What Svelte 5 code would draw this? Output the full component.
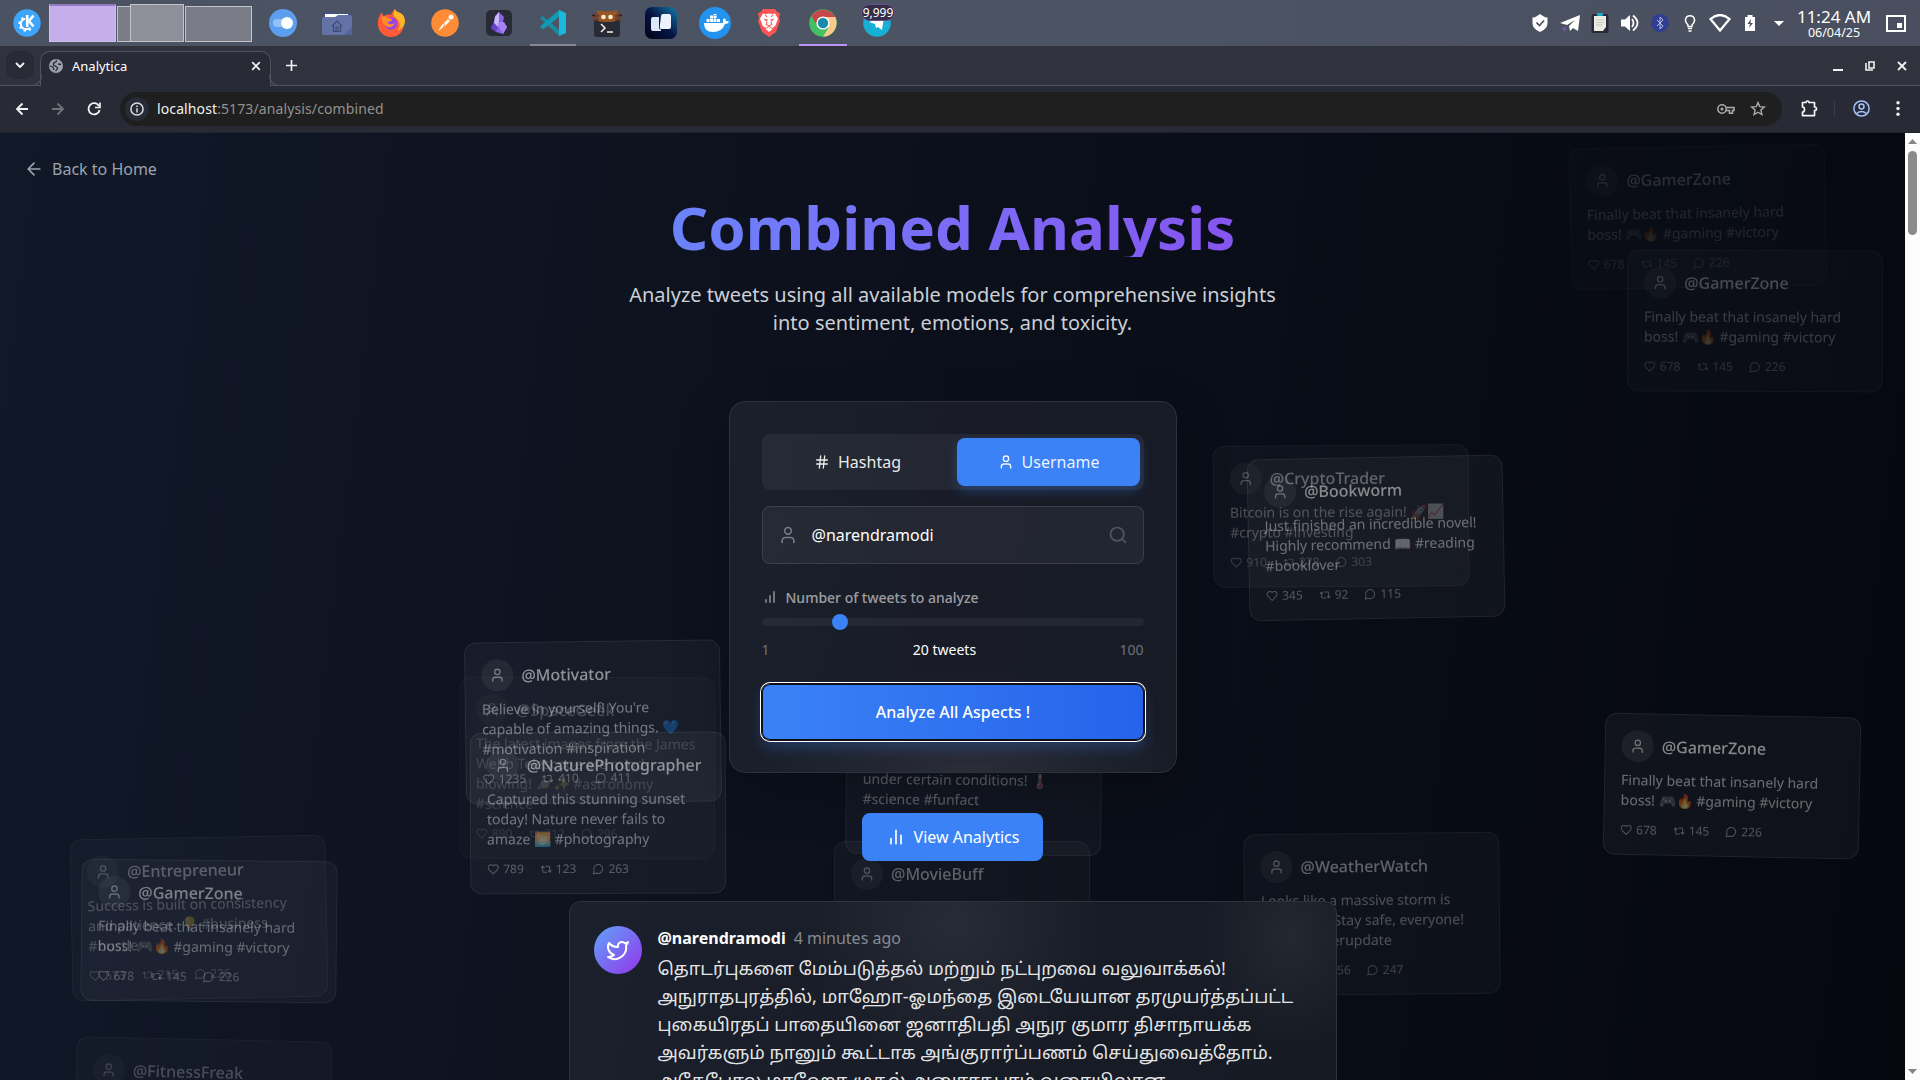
<script lang="ts">
  type Floating = {
    name: string;
    text: string;
    likes: string;
    shares: string;
    replies: string;
    x: number;
    y: number;
    turn: number;
    alpha: number;
  };

  const gamer = {
    name: '@GamerZone',
    text: 'Finally beat that insanely hard boss! 🎮🔥 #gaming #victory',
    likes: '678',
    shares: '145',
    replies: '226'
  };

  // x / y give the centre of each drifting card inside the page canvas
  const floating: Floating[] = [
    { ...gamer, x: 1697.5, y: 83.5, turn: -1.05, alpha: 0.15 },
    { ...gamer, x: 1754.5, y: 187.5, turn: 0.25, alpha: 0.27 },
    { name: '@CryptoTrader', text: 'Bitcoin is on the rise again! 🚀📈 #crypto #investing', likes: '910', shares: '278', replies: '303', x: 1341, y: 382.5, turn: -0.35, alpha: 0.36 },
    { name: '@Bookworm', text: 'Just finished an incredible novel! Highly recommend 📖 #reading #booklover', likes: '345', shares: '92', replies: '115', x: 1375.5, y: 404.5, turn: -1.1, alpha: 0.54 },
    { name: '@SpaceGeek', text: 'The latest images from the James Webb Telescope are mind-blowing! 🪐✨ #astronomy #science', likes: '890', shares: '312', replies: '296', x: 587, y: 634.5, turn: 0.2, alpha: 0.22 },
    { name: '@Motivator', text: "Believe in yourself! You're capable of amazing things. 💙 #motivation #inspiration", likes: '1235', shares: '410', replies: '411', x: 592.5, y: 588.5, turn: -0.75, alpha: 0.58 },
    { name: '@NaturePhotographer', text: 'Captured this stunning sunset today! Nature never fails to amaze 🌅 #photography', likes: '789', shares: '123', replies: '263', x: 597.5, y: 680, turn: -0.2, alpha: 0.57 },
    { name: '@Entrepreneur', text: 'Success is built on consistency and patience. 💡 #business #hustle', likes: '573', shares: '215', replies: '226', x: 198.5, y: 784.5, turn: -1.1, alpha: 0.32 },
    { ...gamer, x: 208.5, y: 797.5, turn: 0.6, alpha: 0.48 },
    { name: '@FitnessFreak', text: 'Morning workout done! Feeling energized and ready. 💪 #fitness', likes: '432', shares: '98', replies: '120', x: 203, y: 977, turn: 1.2, alpha: 0.25 },
    { name: '@ScienceFacts', text: 'Did you know that hot water can freeze faster than cold water under certain conditions! 🌡️ #science #funfact', likes: '654', shares: '187', replies: '210', x: 974, y: 631, turn: 0.6, alpha: 0.45 },
    { name: '@MovieBuff', text: 'That movie was a masterpiece! 🎬🍿 #movies #mustwatch', likes: '567', shares: '134', replies: '189', x: 962, y: 779, turn: 0, alpha: 0.36 },
    { name: '@WeatherWatch', text: 'Looks like a massive storm is coming in. Stay safe, everyone! ⚠️\u00a0#weatherupdate', likes: '478', shares: '156', replies: '247', x: 1372, y: 780.5, turn: -0.6, alpha: 0.38 },
    { ...gamer, x: 1731.5, y: 653, turn: 1.1, alpha: 0.55 }
  ];

  const post = [
    'தொடர்புகளை மேம்படுத்தல் மற்றும் நட்புறவை வலுவாக்கல்!',
    'அநுராதபுரத்தில், மாஹோ-ஓமந்தை இடையேயான தரமுயர்த்தப்பட்ட',
    'புகையிரதப் பாதையினை ஜனாதிபதி அநுர குமார திசாநாயக்க',
    'அவர்களும் நானும் கூட்டாக அங்குரார்ப்பணம் செய்துவைத்தோம்.',
    'அதேபோல மாஹோ முதல் அனுராதபுரம் வரையிலான'
  ];

  let query = $state('@narendramodi');
  let count = $state(20);
  let mode = $state('username');
</script>

{#snippet user(size: number)}
  <svg class="line" width={size} height={size} viewBox="0 0 24 24"><path d="M19 21v-2a4 4 0 0 0-4-4H9a4 4 0 0 0-4 4v2" /><circle cx="12" cy="7" r="4" /></svg>
{/snippet}

<div class="screen">
  <header class="panel">
    <div class="launcher">
      <svg width="28" height="28" viewBox="0 0 28 28"><circle cx="14" cy="14" r="13.7" fill="#3da5fb" /><circle cx="13" cy="15" r="5.200" fill="none" stroke="#fff" stroke-width="2" /><circle cx="13" cy="15" r="6.800" fill="none" stroke="#fff" stroke-width="1.800" stroke-dasharray="2.400 2.940" /><path d="M11.500 5.500h11v13h-9z" fill="#3da5fb" /><path d="M14.200 6v12M20.500 6.500 16 12l4.500 5.500" fill="none" stroke="#fff" stroke-width="2.600" /></svg>
    </div>
    <div class="pager">
      <i class="desk active"></i>
      <i class="desk"><b></b></i>
      <i class="desk"></i>
    </div>
    <div class="tasks">
      <span class="task"><svg width="28" height="28" viewBox="0 0 28 28"><circle cx="14" cy="14" r="14" fill="#5c9fee" /><rect x="4" y="10" width="17" height="8" rx="4" fill="#94c1f5" /><circle cx="18" cy="14" r="6" fill="#fff" /></svg></span>
      <span class="task"><svg width="30" height="26" viewBox="0 0 30 26"><path d="M1 3q0-2 2-2h9l2 2h13q2 0 2 2v18H1z" fill="#45507c" /><path d="M3 4h23v5H3z" fill="#fff" /><path d="M0 9q0-2 2-2h11l3-2h12q2 0 2 2v16q0 2-2 2H2q-2 0-2-2z" fill="#6373a8" /><path d="m10 16 5-5 5 5M11.500 15v6.500h7V15M14 21v-4h2v4" fill="none" stroke="#414c78" stroke-width="1.200" /><path d="m22 25 8-8v6q0 2-2 2z" fill="#55649a" /></svg></span>
      <span class="task"><svg width="28" height="28" viewBox="0 0 28 28"><path d="M2 8q1-3 3-5 0 3 2 4 4-3 7-1c1-3 2-4 4-6 0 4 8 6 9 14a13 13 0 0 1-26 2Q.5 11 2 8z" fill="#ff5b36" /><path d="M18 0c-2 4-2 7 1 9 4 3 5 9 1 13 9-3 10-12 5-17-3-2-6-2-7-5z" fill="#ffb52b" /><circle cx="14" cy="14.500" r="6.200" fill="#9046e8" /><path d="M4 8q4-2 7 1l4 1q0 3-5 3 3 4 8 1-2 5-7 4-6-2-7-10z" fill="#ff8a2b" /></svg></span>
      <span class="task"><svg width="28" height="28" viewBox="0 0 28 28"><circle cx="14" cy="14" r="13.800" fill="#ff8b37" /><circle cx="20" cy="8" r="2.500" fill="#fff" /><path d="m7 22 4-6 6-6 2 2-5 5z" fill="#fff" /><path d="M13 14q1 4-1 4" stroke="#ff8b37" fill="none" /></svg></span>
      <span class="task"><svg width="26" height="26" viewBox="0 0 26 26"><rect width="26" height="26" rx="5" fill="#282a36" /><path d="m13 2 5 5-1 5 4 5-4 7-7-2-5-4 3-6 1-6z" fill="#8b63e8" /><path d="m13 2-4 5-1 6 4 5 1-8z" fill="#c9b8f8" /><path d="m8 13-3 5 5 4 2-5z" fill="#6a40c9" /><path d="m13 12 5 0 3 5-4 7-4-7z" fill="#a583f2" /></svg></span>
      <span class="task open"><svg width="28" height="28" viewBox="0 0 28 28"><path d="m1 9 3-2 16 14v6z" fill="#178ba2" /><path d="m1 17.500 3 3L20 8V1z" fill="#1299b4" /><path d="m20 1 7 3v20l-7 3z" fill="#18b9dc" /></svg></span>
      <span class="task"><svg width="30" height="28" viewBox="0 0 30 28"><rect x="2" y="10" width="26" height="18" rx="3" fill="#282a36" /><path d="M5 1q10 3 20 0v8q2 4-10 4T5 9z" fill="#9a5524" /><path d="M1 5l6 2-7 1M1 11l6-1M29 5l-6 2 7 1M29 11l-6-1" stroke="#6b3d28" stroke-width="2" /><circle cx="11.500" cy="8" r="2.300" fill="#f3eed0" /><circle cx="18.500" cy="8" r="2.300" fill="#f3eed0" /><path d="m9 15 4 4-4 4M15 23h6" fill="none" stroke="#f5f2df" stroke-width="1.500" /></svg></span>
      <span class="task"><svg width="32" height="32" viewBox="0 0 32 32"><defs><linearGradient id="cards" x1="0" y1="1" x2="1" y2="0"><stop stop-color="#030316" /><stop offset=".5" stop-color="#071544" /><stop offset="1" stop-color="#127aa9" /></linearGradient></defs><rect width="32" height="32" rx="7" fill="url(#cards)" /><path d="M8 10h6v11q0 1.500 2 1.500v1.500H8q-2 0-2-2V12q0-2 2-2z" fill="#dfe8fb" /><path d="M18 7h6q2 0 2 2v11q0 2-2 2h-8q-1.500 0-1.300-2L16 9q.2-2 2-2z" fill="#edf2fd" /></svg></span>
      <span class="task"><svg width="32" height="32" viewBox="0 0 32 32"><circle cx="16" cy="16" r="16" fill="#2293ef" /><path d="M5 16h19q-1-3 1-5 2 1 2 3 2-.5 3 1-1 2-4 2-3 8-12 8Q5 25 5 16z" fill="#fff" /><path d="M7.500 12h3v3h-3zM11 12h3v3h-3zM14.500 12h3v3h-3zM18 12h3v3h-3zM11 8.500h3v3h-3zM14.500 8.500h3v3h-3zM14.500 7h3v1h-3z" fill="#fff" /></svg></span>
      <span class="task"><svg width="24" height="28" viewBox="0 0 24 28"><path d="M6 0h12l2 3 3 1-1 5 1 3-4 11-7 5-7-5L1 12l1-3-1-5 3-1z" fill="#fb5553" /><path d="m6 4.500 3 .5 3-.5 3 .5 3-.5 3 5-2.500 7-3 2.500-3.500-2-3.500 2-3-2.500L3 9.500z" fill="#fff" /><path d="m6.500 9.500 4.500 1.200-1.500 2zM17.500 9.500 13 10.700l1.500 2z" fill="#fb5553" /><path d="m8 5.500 2 2.500M16 5.500 14 8M10 13l-.8 2.500L12 17l2.800-1.500L14 13" fill="none" stroke="#fb5553" stroke-width="1.100" /><path d="m8.500 20 3.500-2 3.500 2L12 23z" fill="#fff" /></svg></span>
      <span class="task focused"><svg width="28" height="28" viewBox="0 0 28 28"><circle cx="14" cy="14" r="13.800" fill="#43bf64" /><path d="M2.500 7A14 14 0 0 1 26.300 8H14l-5.500 9z" fill="#c64747" /><path d="M14 8h12.300A14 14 0 0 1 14 27.800l5.500-9z" fill="#fcc98d" /><circle cx="14" cy="14" r="6.600" fill="#fff" /><circle cx="14" cy="14" r="5.200" fill="#178ba8" /></svg></span>
      <span class="task"><svg width="28" height="28" viewBox="0 0 28 28"><circle cx="14" cy="14" r="13.800" fill="#16b0d6" /><path d="M6 13 21 8l-2 13-4-3-2 1-1-4z" fill="#fff" /></svg><em>9,999</em></span>
    </div>
    <div class="tray">
      <span><svg width="16" height="18" viewBox="0 0 16 18"><path d="m8 0 3 2q2 1.500 4.500 1.500V9q0 6-7.500 9Q.5 15 .5 9V3.500Q3 3.500 5 2z" fill="#fff" /><path d="m4.500 8.500 3 3 4.500-5" fill="none" stroke="#4b5160" stroke-width="1.700" /></svg></span>
      <span><svg width="20" height="18" viewBox="0 0 20 18"><path d="M0 9 20 1l-2 16-5-3-3 3-1-5 6-6-8 5z" fill="#fff" /><circle cx="4.500" cy="15" r="2.300" fill="#6f5795" /></svg></span>
      <span><svg width="18" height="20" viewBox="0 0 18 20"><rect x=".5" y="1" width="17" height="19" rx="2" fill="#282a36" /><path d="M3 3h12v11l-3 4H3z" fill="#ebebe4" /><path d="M5 7h8M5 9.500h8M5 12h6" stroke="#c5c5c0" /><rect x="6" width="6" height="3" rx="1" fill="#17a9cf" /></svg></span>
      <span><svg width="18" height="18" viewBox="0 0 18 18"><path d="M0 5.500h4L9 1v16l-5-4.500H0z" fill="#fff" /><path d="M11 5q3 4 0 8M12 1.500q9 7.500 0 15" fill="none" stroke="#fff" stroke-width="1.800" /></svg></span>
      <span><svg width="18" height="18" viewBox="0 0 18 18"><circle cx="9" cy="9" r="9" fill="#303f93" /><path d="m6 6 6 6-3 3V3l3 3-6 6" fill="none" stroke="#b9c0df" /></svg></span>
      <span><svg width="12" height="18" viewBox="0 0 12 18"><path d="M4 11Q1 8 1.500 5.500a4.600 4.600 0 0 1 9 0Q11 8 8 11v1.500H4zM4 14.500h4M4.500 17h3" fill="none" stroke="#fff" stroke-width="1.500" /></svg></span>
      <span><svg width="22" height="18" viewBox="0 0 22 18"><path d="M1.500 5Q11-3 20.500 5L11 16.500z" fill="none" stroke="#fff" stroke-width="2.200" /></svg></span>
      <span><svg width="12" height="16" viewBox="0 0 12 16"><path d="M3.500 0h5v2H11v14H1V2h2.500z" fill="#fff" /><path d="M7 4 3.500 9H6l-1 4L9 8H6.500z" fill="#4b5160" /></svg></span>
      <span><svg width="10" height="5" viewBox="0 0 10 5"><path d="M0 0h10L5 5z" fill="#fff" /></svg></span>
    </div>
    <div class="clock"><strong>11:24 AM</strong><small>06/04/25</small></div>
    <svg class="peek" width="20" height="17" viewBox="0 0 20 17"><rect x="1" y="1" width="18" height="15" fill="none" stroke="#fff" stroke-width="2" /><path d="M11 8h5v5h-5z" fill="#fff" /></svg>
  </header>

  <div class="tabs">
    <button class="tab-search" aria-label="Search tabs"><svg width="10" height="6" viewBox="0 0 10 6"><path d="m1 1 4 4 4-4" fill="none" stroke="#f2f2f2" stroke-width="1.900" /></svg></button>
    <div class="tab">
      <svg width="14" height="14" viewBox="0 0 14 14"><circle cx="7" cy="7" r="7" fill="#9da1ab" /><path d="M7.500 1 7 3 4.500 4v2L7 7.500l1.500 1L8 10.500 6.500 12M1 7l3 1 1 3M9 5l3 .5" fill="none" stroke="#282a36" stroke-width="1.300" /></svg>
      <span>Analytica</span>
      <svg width="10" height="10" viewBox="0 0 10 10"><path d="m1.200 1.200 7.600 7.600m0-7.600L1.200 8.800" stroke="#f2f2f2" stroke-width="1.700" /></svg>
    </div>
    <svg class="plus" width="11" height="11" viewBox="0 0 11 11"><path d="M5.500 0v11M0 5.500h11" stroke="#f2f2f2" stroke-width="1.700" /></svg>
    <div class="window">
      <svg width="10" height="10" viewBox="0 0 10 10"><path d="M0 9h10" stroke="#f2f2f2" stroke-width="2" /></svg>
      <svg width="10" height="10" viewBox="0 0 10 10"><path d="M4 1h5v6H4zM1 2v7h7" fill="none" stroke="#f2f2f2" stroke-width="1.600" /></svg>
      <svg width="10" height="10" viewBox="0 0 10 10"><path d="m1 1 8 8m0-8L1 9" stroke="#f2f2f2" stroke-width="1.800" /></svg>
    </div>
  </div>

  <div class="toolbar">
    <div class="nav">
      <svg width="14" height="14" viewBox="0 0 14 14"><path d="M13 7H2m5.500-5.500L2 7l5.500 5.500" fill="none" stroke="#f4f4f4" stroke-width="1.800" /></svg>
      <svg width="14" height="14" viewBox="0 0 14 14"><path d="M1 7h11M6.500 1.500 12 7l-5.500 5.500" fill="none" stroke="#70727b" stroke-width="1.800" /></svg>
      <svg width="14" height="14" viewBox="0 0 14 14"><path d="M12 4A5.600 5.600 0 1 0 12.600 8" fill="none" stroke="#f4f4f4" stroke-width="1.800" /><path d="M13 .5V5.500H8" fill="none" stroke="#f4f4f4" stroke-width="1.700" /></svg>
    </div>
    <div class="address">
      <span class="info"><svg width="14" height="14" viewBox="0 0 14 14"><circle cx="7" cy="7" r="6.100" fill="none" stroke="#dcdde0" stroke-width="1.500" /><path d="M7 6.200V10.500M7 3.500v1.600" stroke="#dcdde0" stroke-width="1.500" /></svg></span>
      <span class="url"><b>localhost</b>:5173/analysis/combined</span>
      <svg class="key" width="18" height="12" viewBox="0 0 18 12"><circle cx="5" cy="6" r="4.200" fill="none" stroke="#abacae" stroke-width="1.500" /><circle cx="5" cy="6" r="1.500" fill="#abacae" /><path d="M9 4.500h8v3h-1.500v2.700h-3V7.500H9" fill="none" stroke="#abacae" stroke-width="1.500" /></svg>
      <svg class="star" width="16" height="15" viewBox="0 0 16 15"><path d="m8 1.600 1.800 4.100 4.500.4-3.400 3 1 4.400L8 11.200l-3.900 2.300 1-4.400-3.400-3 4.500-.4z" fill="none" stroke="#abacae" stroke-width="1.400" /></svg>
    </div>
    <svg class="puzzle" width="17" height="17" viewBox="0 0 17 17"><path d="M1.500 2.500H5q0-1.500 1.500-1.500T8 2.500h5.500V7q2 0 2 1.800t-2 1.800v5h-12V12q2 0 2-2.500t-2-2.500z" fill="none" stroke="#f4f4f4" stroke-width="1.700" stroke-linejoin="round" /></svg>
    <i class="rule"></i>
    <svg class="profile" width="17" height="17" viewBox="0 0 17 17"><g fill="none" stroke="#a4c2f7" stroke-width="1.500"><circle cx="8.500" cy="8.500" r="7.600" /><circle cx="8.500" cy="6.500" r="2.500" /><path d="M3.500 13.500q5-4 10 0" /></g></svg>
    <svg class="dots" width="4" height="15" viewBox="0 0 4 15"><g fill="#f2f2f2"><circle cx="2" cy="1.700" r="1.700" /><circle cx="2" cy="7.500" r="1.700" /><circle cx="2" cy="13.300" r="1.700" /></g></svg>
  </div>

  <div class="viewport">
    <div class="page">
      <div class="drift" aria-hidden="true">
        {#each floating as card}
          <article style="left:{card.x}px;top:{card.y}px;opacity:{card.alpha};transform:translate(-50%,-50%) rotate({card.turn}deg)">
            <div class="who"><span class="face">{@render user(16)}</span><strong>{card.name}</strong></div>
            <p>{card.text}</p>
            <div class="stats">
              <span><svg class="line" width="12" height="12" viewBox="0 0 24 24"><path d="M19 14c1.490-1.460 3-3.210 3-5.500A5.500 5.500 0 0 0 16.500 3c-1.760 0-3 .5-4.500 2-1.500-1.500-2.740-2-4.500-2A5.500 5.500 0 0 0 2 8.500c0 2.300 1.500 4.050 3 5.500l7 7Z" /></svg>{card.likes}</span>
              <span><svg class="line" width="12" height="12" viewBox="0 0 24 24"><path d="m2 9 3-3 3 3M13 18H7a2 2 0 0 1-2-2V6M22 15l-3 3-3-3M11 6h6a2 2 0 0 1 2 2v10" /></svg>{card.shares}</span>
              <span><svg class="line" width="12" height="12" viewBox="0 0 24 24"><path d="M7.900 20A9 9 0 1 0 4 16.100L2 22Z" /></svg>{card.replies}</span>
            </div>
          </article>
        {/each}
      </div>

      <main>
        <a class="back" href="#home"><svg class="line" width="20" height="20" viewBox="0 0 24 24"><path d="m12 19-7-7 7-7M19 12H5" /></svg>Back to Home</a>
        <h1>Combined Analysis</h1>
        <p class="lead">Analyze tweets using all available models for comprehensive insights into sentiment, emotions, and toxicity.</p>

        <section class="form">
          <div class="switch">
            <button class:on={mode === 'hashtag'} onclick={() => (mode = 'hashtag')}><svg class="line" width="16" height="16" viewBox="0 0 24 24"><path d="M4 9h16M4 15h16M10 3 8 21M16 3l-2 18" /></svg>Hashtag</button>
            <button class:on={mode === 'username'} onclick={() => (mode = 'username')}>{@render user(16)}Username</button>
          </div>
          <div class="field">
            {@render user(20)}
            <input bind:value={query} aria-label="Username" />
            <svg class="line find" width="20" height="20" viewBox="0 0 24 24"><circle cx="11" cy="11" r="8" /><path d="m21 21-4.300-4.300" /></svg>
          </div>
          <div class="label"><svg class="line" width="16" height="16" viewBox="0 0 24 24"><path d="M12 20V10M18 20V4M6 20v-4" /></svg>Number of tweets to analyze</div>
          <input class="range" type="range" min="1" max="100" bind:value={count} aria-label="Number of tweets" />
          <div class="scale"><span>1</span><b>{count} tweets</b><span>100</span></div>
          <button class="submit">Analyze All Aspects !</button>
        </section>

        <button class="view"><svg class="line" width="20" height="20" viewBox="0 0 24 24"><path d="M18 20V10M12 20V4M6 20v-6" /></svg>View Analytics</button>

        <section class="result">
          <span class="avatar"><svg class="line" width="24" height="24" viewBox="0 0 24 24"><path d="M22 4s-.7 2.100-2 3.400c1.600 10-9.400 17.300-18 11.600 2.200.1 4.400-.6 6-2C3 15.500.5 9.600 3 5c2.200 2.600 5.600 4.100 9 4-.9-4.200 4-6.600 7-3.800 1.100 0 3-1.200 3-1.200z" /></svg></span>
          <div class="body">
            <div class="byline"><strong>@narendramodi</strong><span>4 minutes ago</span></div>
            <p>{#each post as row}<span>{row}</span>{/each}</p>
          </div>
        </section>
      </main>
    </div>
    <aside class="scroll">
      <svg width="9" height="5" viewBox="0 0 9 5"><path d="M0 5 4.500 0 9 5z" fill="#858585" /></svg>
      <i></i>
      <svg width="9" height="5" viewBox="0 0 9 5"><path d="m0 0 4.500 5L9 0z" fill="#858585" /></svg>
    </aside>
  </div>
</div>

<style>
  :global(body) { margin: 0; overflow: hidden; background: #0a0e18; }
  .screen, .screen * { box-sizing: border-box; }
  .screen { width: 1920px; height: 1080px; display: flex; flex-direction: column; overflow: hidden; font-family: 'Noto Sans', 'Noto Sans Tamil', sans-serif; color: #fff; }
  button, input { font: inherit; color: inherit; border: 0; background: none; padding: 0; margin: 0; }
  svg { display: block; flex: none; }
  .line { fill: none; stroke: currentColor; stroke-width: 2; stroke-linecap: round; stroke-linejoin: round; }

  .panel { height: 46px; display: flex; align-items: center; background: linear-gradient(90deg, #4b5363, #4c5362 60%, #494f5e); flex: none; }
  .launcher { width: 49px; padding-left: 13px; }
  .pager { display: flex; gap: 1px; width: 207px; align-items: flex-end; height: 38px; }
  .desk { width: 67px; height: 36px; background: #7a7d87; border: 1px solid #c2c4c9; display: flex; justify-content: flex-end; align-items: flex-end; flex: none; }
  .desk.active { height: 38px; background: #c6aeea; border-color: #d2c0ee; border-top: 2px solid #9478c0; }
  .desk b { width: 54px; height: 38px; margin: 0 -1px -1px 0; background: #8d9098; border: 1px solid #c2c4c9; flex: none; }
  .tasks { display: flex; }
  .task { width: 54px; height: 46px; display: flex; align-items: center; justify-content: center; position: relative; }
  .task.open::after, .task.focused::after { content: ''; position: absolute; bottom: 0; left: 4px; width: 46px; height: 2px; background: #858995; }
  .task.focused::after { background: #bd93f9; left: 3px; width: 48px; }
  .task em { position: absolute; left: 11px; top: 4px; width: 34px; height: 17px; border: 1px solid #6d4f96; border-radius: 9px; background: #342d47; font: 12px/15px 'Noto Sans', sans-serif; text-align: center; }
  .tray { display: flex; margin-left: auto; }
  .tray span { width: 30px; display: flex; align-items: center; justify-content: center; }
  .tray span:last-child { width: 27px; }
  .clock { width: 80px; margin: 0 12px 0 2px; padding-top: 1px; display: flex; flex-direction: column; align-items: center; }
  .clock strong { font-size: 17px; line-height: 17px; font-weight: 400; white-space: nowrap; }
  .clock small { font-size: 12.500px; line-height: 15px; }
  .peek { margin-right: 14px; }

  .tabs { height: 40px; flex: none; display: flex; align-items: center; background: #30333e; border-bottom: 1px solid #50525c; padding-left: 6px; }
  .tab-search { width: 28px; height: 28px; border-radius: 9px; background: #282a36; display: grid; place-items: center; margin-bottom: 1px; }
  .tab { align-self: flex-end; height: 35px; width: 231px; margin: 0 0 -1px 6px; border: 1px solid #50525c; border-bottom: 0; border-radius: 10px 10px 0 0; background: #282a36; display: flex; align-items: center; padding: 0 9px 6px 8px; font-size: 13px; position: relative; }
  .tab::before, .tab::after { content: ''; position: absolute; bottom: 0; width: 10px; height: 10px; border-bottom: 1px solid #50525c; }
  .tab::before { left: -10px; border-right: 1px solid #50525c; border-radius: 0 0 10px 0; }
  .tab::after { right: -10px; border-left: 1px solid #50525c; border-radius: 0 0 0 10px; }
  .tab span { margin: 0 auto 0 9px; }
  .plus { margin: 0 0 1px 15px; }
  .window { display: flex; gap: 22px; margin: 0 13px 0 auto; }
  .toolbar { height: 47px; flex: none; background: #282a36; display: flex; align-items: center; padding: 0 0 1px 15px; border-bottom: 1px solid #20222d; }
  .nav { display: flex; gap: 22px; width: 105px; }
  .address { width: 1662px; height: 34px; border-radius: 17px; background: #1f1f1f; display: flex; align-items: center; padding: 0 16px 0 5px; }
  .info { width: 24px; height: 24px; border-radius: 50%; background: #282a36; display: grid; place-items: center; }
  .url { margin: 0 auto 0 8px; font-size: 14px; letter-spacing: 0.11px; color: #929292; }
  .url b { font-weight: 400; color: #f0f0f0; }
  .star { margin-left: 15px; }
  .puzzle { margin-left: 19px; }
  .rule { width: 1px; height: 16px; background: #3b3d49; margin: 0 18px 0 16px; }
  .dots { margin-left: 26px; }

  .viewport { flex: 1; min-height: 0; display: flex; }
  .page { width: 1905px; overflow: hidden; position: relative; background: linear-gradient(97deg, #111828 0%, #0b0f1a 52%, #05080f 100%); }
  .drift { position: absolute; inset: 0; }
  article { position: absolute; width: 256px; padding: 16px; border: 1px solid rgba(255, 255, 255, 0.13); border-radius: 12px; background: rgba(255, 255, 255, 0.07); }
  .who { display: flex; align-items: center; gap: 8px; margin-bottom: 8px; font-size: 16px; }
  .who strong { font-weight: 500; color: rgba(255, 255, 255, 0.92); line-height: 24px; }
  .face { width: 32px; height: 32px; border-radius: 50%; background: rgba(255, 255, 255, 0.1); display: grid; place-items: center; color: rgba(255, 255, 255, 0.7); }
  article p { margin: 0 0 12px; font-size: 14px; line-height: 20px; color: rgba(255, 255, 255, 0.7); }
  .stats { display: flex; gap: 16px; font-size: 12px; line-height: 16px; color: rgba(255, 255, 255, 0.5); }
  .stats span { display: flex; align-items: center; gap: 4px; }

  main { position: relative; display: flex; flex-direction: column; align-items: center; height: 100%; }
  .back { align-self: flex-start; display: flex; align-items: center; gap: 8px; margin: 24px 0 0 24px; height: 24px; font-size: 16px; line-height: 24px; color: #9ca3af; text-decoration: none; }
  h1 { margin: 16px 0 24px; font-size: 60px; line-height: 60px; font-weight: 700; color: transparent; background: linear-gradient(90deg, #6b83fa, #7b6cf5 50%, #8555ef); background-clip: text; -webkit-background-clip: text; }
  .lead { margin: 0; width: 672px; text-align: center; font-size: 20px; line-height: 28px; color: #cbcfd5; }
  .form { width: 448px; height: 372px; flex: none; margin-top: 64px; padding: 32px; border: 1px solid #2d313b; border-radius: 16px; background: radial-gradient(ellipse 48% 28% at 54% 100%, rgba(255, 255, 255, 0.08), transparent), linear-gradient(97deg, #1a202b, #191c27 45%, #171b25); box-shadow: 0 16px 50px rgba(0, 0, 0, 0.25); display: flex; flex-direction: column; }
  .switch { display: flex; gap: 8px; padding: 4px; height: 56px; border-radius: 8px; background: rgba(255, 255, 255, 0.05); }
  .switch button { flex: 1; display: flex; align-items: center; justify-content: center; gap: 8px; padding-left: 1px; border-radius: 8px; font-size: 16px; color: rgba(255, 255, 255, 0.92); }
  .switch button.on { background: #3b82f6; box-shadow: 0 5px 12px rgba(59, 130, 246, 0.3); }
  .field { height: 58px; margin-top: 16px; border: 1px solid rgba(255, 255, 255, 0.1); border-radius: 8px; background: rgba(255, 255, 255, 0.05); display: flex; align-items: center; padding: 0 15px; color: #777a82; }
  .field input { flex: 1; min-width: 0; margin-left: 14px; color: #fff; font-size: 16px; outline: 0; }
  .find { color: #53565e; }
  .label { display: flex; align-items: center; gap: 8px; height: 20px; margin-top: 23px; font-size: 14px; font-weight: 500; color: rgba(255, 255, 255, 0.58); }
  .range { appearance: none; width: 100%; height: 8px; margin-top: 11px; border-radius: 8px; background: rgba(255, 255, 255, 0.05); flex: none; }
  .range::-webkit-slider-thumb { appearance: none; width: 16px; height: 16px; border-radius: 50%; background: #3b82f6; }
  .scale { display: flex; justify-content: space-between; margin: 14px 0 24px; font-size: 14px; line-height: 20px; color: #6f727a; }
  .scale b { font-weight: 400; color: #fff; }
  .submit { align-self: center; width: 100%; flex: none; height: 56px; padding-left: 1px; border-radius: 8px; font-weight: 500; background: linear-gradient(90deg, #3b82f6, #2563eb); box-shadow: inset 0 0 0 1px #101014, 0 0 0 1px #101014, 0 0 0 2px #fff, 0 8px 14px rgba(59, 130, 246, 0.28); }
  .view { display: flex; align-items: center; justify-content: center; gap: 8px; flex: none; height: 48px; width: 181px; margin-top: 40px; border-radius: 8px; background: #3b82f6; font-size: 16px; }
  .result { width: 768px; height: 400px; flex: none; margin-top: 40px; padding: 24px; border: 1px solid #2f333c; border-radius: 12px; background: radial-gradient(ellipse 150px 150px at 385px 20px, rgba(255, 255, 255, 0.065), transparent), radial-gradient(ellipse 90px 110px at 720px 35px, rgba(255, 255, 255, 0.06), transparent), linear-gradient(97deg, #1a202c, #181c27 50%, #151a23); display: flex; gap: 16px; }
  .avatar { width: 48px; height: 48px; border-radius: 50%; flex: none; display: grid; place-items: center; background: linear-gradient(135deg, #60a5fa, #9333ea); }
  .byline { display: flex; gap: 8px; font-size: 16px; line-height: 24px; }
  .byline span { color: #868a92; }
  .body p { margin: 4px 0 0; font-size: 18.130px; line-height: 28px; color: rgba(255, 255, 255, 0.9); }
  .body p span { display: block; white-space: nowrap; }

  .scroll { width: 15px; background: #fcfcfc; display: flex; flex-direction: column; align-items: center; padding: 6px 0; }
  .scroll i { width: 9px; height: 84px; margin: 7px 0 auto; border-radius: 5px; background: #8b8b8b; }
</style>
